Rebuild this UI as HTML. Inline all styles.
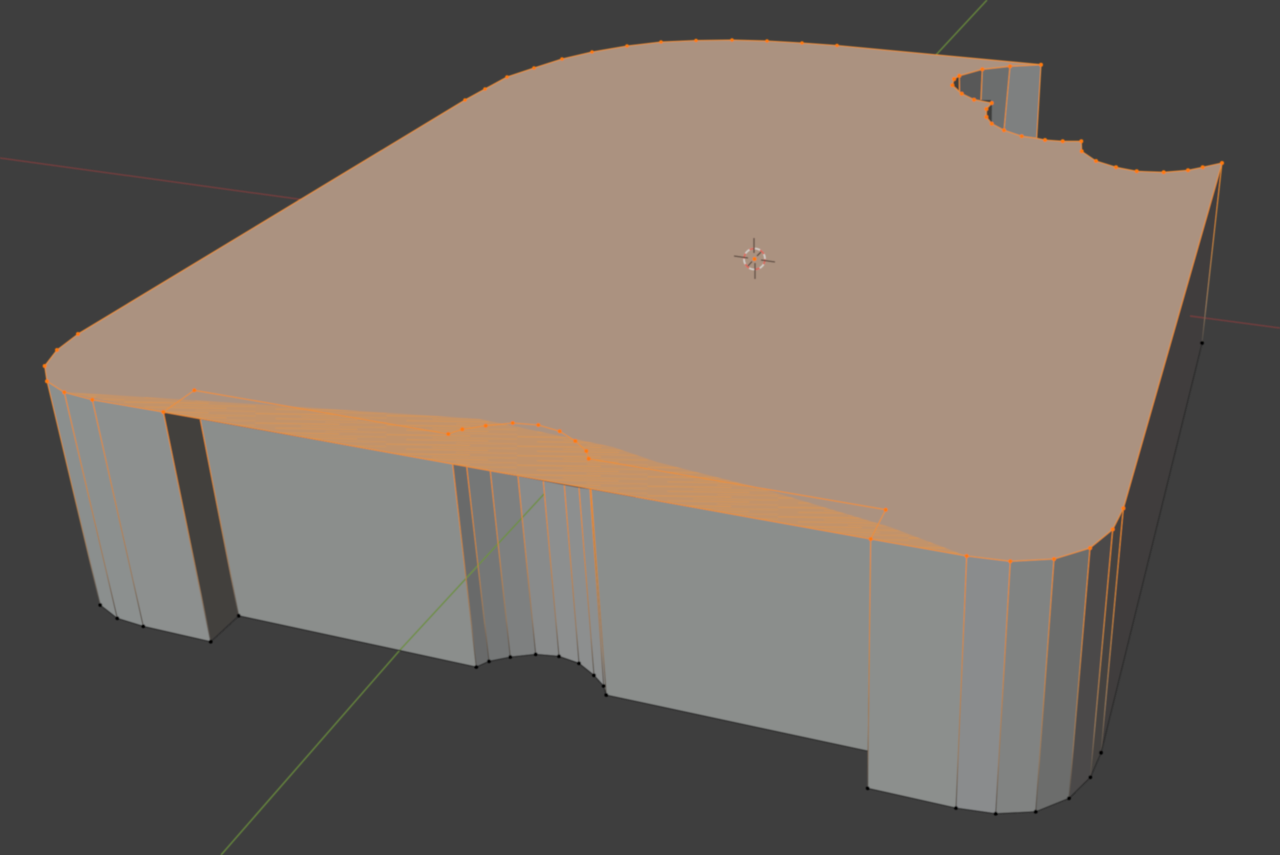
<!DOCTYPE html>
<html lang="en">
<head>
<meta charset="utf-8">
<title>3D viewport</title>
<style>
html,body{margin:0;padding:0;background:#3e3e3e;width:1280px;height:855px;overflow:hidden}
svg{display:block}
</style>
</head>
<body>
<svg width="1280" height="855" viewBox="0 0 1280 855" xmlns="http://www.w3.org/2000/svg">
<defs>
<filter id="soft" x="0" y="0" width="1280" height="855" filterUnits="userSpaceOnUse"><feGaussianBlur stdDeviation="0.4"/></filter>
<linearGradient id="e" x1="0" y1="0" x2="0" y2="1">
<stop offset="0" stop-color="#f08a28"/>
<stop offset=".45" stop-color="#c98540"/>
<stop offset=".8" stop-color="#94785c"/>
<stop offset="1" stop-color="#4e4b48"/>
</linearGradient>
<pattern id="h" width="131" height="9.5" patternUnits="userSpaceOnUse" patternTransform="rotate(0.9)">
<line x1="0" y1="1" x2="84" y2="1" stroke="#f0963c" stroke-opacity=".42" stroke-width="1"/>
<line x1="46" y1="3.4" x2="131" y2="3.4" stroke="#f0963c" stroke-opacity=".3" stroke-width="1"/>
<line x1="20" y1="5.8" x2="102" y2="5.8" stroke="#f0963c" stroke-opacity=".4" stroke-width="1"/>
<line x1="70" y1="8.2" x2="131" y2="8.2" stroke="#f0963c" stroke-opacity=".28" stroke-width="1"/>
</pattern>
<clipPath id="hc"><polygon points="64,392 330,409 480,419 613,447 657,462 700,473 760,488 800,500 890,527 966.7,556 870.7,539 163.3,412"/></clipPath>
</defs>
<rect width="1280" height="855" fill="#3e3e3e"/>
<g filter="url(#soft)">

<!-- axes -->
<g fill="none" stroke-width="1.5">
<line x1="0" y1="158" x2="305" y2="200" stroke="#713d3e"/>
<line x1="987" y1="0" x2="935" y2="56" stroke="#64823c"/>
<line x1="400" y1="650" x2="221" y2="855" stroke="#64823c"/>
</g>

<!-- walls -->
<g stroke="none">
<polygon points="1123,508 1222,163 1202,343 1101,752.7" fill="#3f3d3c"/>
<polygon points="47,381 64.3,392.3 117.3,618.3 100.3,605" fill="#8b8f8e"/>
<polygon points="64.3,392.3 92.3,399.7 143.3,626.3 117.3,618.3" fill="#8c908f"/>
<polygon points="92.3,399.7 163.3,412 210.7,641.7 143.3,626.3" fill="#8d908f"/>
<polygon points="163.3,412 200.3,419.3 238.7,615.7 210.7,641.7" fill="#433f3e"/>
<polygon points="200.3,419.3 452.7,464.3 476.3,667 238.7,615.7" fill="#8b8e8c"/>
<polygon points="452.7,464.3 466.7,466.7 489,661.3 476.3,667" fill="#696a6a"/>
<polygon points="466.7,466.7 490.3,471 510.3,657 489,661.3" fill="#757777"/>
<polygon points="490.3,471 518,476.3 535.7,654.3 510.3,657" fill="#7e8080"/>
<polygon points="518,476.3 543.3,481 559,656.3 535.7,654.3" fill="#898b8b"/>
<polygon points="543.3,481 564.3,485 579,663.3 559,656.3" fill="#8d8f8f"/>
<polygon points="564.3,485 579,487.7 594,675.3 579,663.3" fill="#8d8f8f"/>
<polygon points="579,487.7 590,489.3 606.3,695 603.7,686 594,675.3" fill="#8d8f8f"/>
<polygon points="590,489.3 870.7,539 867.7,751 606.3,695" fill="#8b8e8c"/>
<polygon points="870.7,539 966.7,556 956,808 867.7,788.3" fill="#8c8f8d"/>
<polygon points="966.7,556 1010.3,561.3 995.7,813.7 956,808" fill="#8a8c8d"/>
<polygon points="1010.3,561.3 1054,559 1035.7,811.7 995.7,813.7" fill="#818382"/>
<polygon points="1054,559 1090,548 1069,798.3 1035.7,811.7" fill="#6c6d6c"/>
<polygon points="1090,548 1112.7,529.3 1090.3,777.3 1069,798.3" fill="#4b4949"/>
<polygon points="1112.7,529.3 1123.3,508.3 1101,752.7 1090.3,777.3" fill="#444241"/>
<!-- back cutout walls -->
<polygon points="1010,64 1041,64.7 1036.7,145 1004,135" fill="#7e8080"/>
<polygon points="982.3,64 1010.3,64 1004,135 990,125 991,100 980,100" fill="#6c6e6e"/>
<polygon points="959.3,70 982.3,66 980,102 960,95" fill="#585858"/>
<polygon points="950,78 959.3,72 959,95 950,88" fill="#3d3c3b"/>
<polygon points="992,104 986.3,109 986.3,117 991.7,124" fill="#3d3c3b"/>
</g>

<line x1="1190" y1="316" x2="1280" y2="328" stroke="#713d3e" stroke-width="1.5"/>
<!-- green axis over wall -->
<line x1="544" y1="494" x2="400" y2="650" stroke="#6f8f45" stroke-width="1.5"/>

<!-- top face -->
<polygon fill="#ab9280" points="1041,64.7 837,45.5 802,43 767,41 732,40 696,40.5 661,42 627,46 592,52 562,59 534,68 507,77 485,89 465,100 78,334 57,350 44.7,366 47,381.3 64.3,392.3 92.3,399.7 163.3,412 870.7,539 966.7,556 1010.3,561.3 1054,559 1090,548 1112.7,529.3 1123.3,508.3 1222,163 1202.7,167.3 1188,170.3 1163.7,172.3 1136.7,171.3 1116,167.3 1096,161 1081.7,151.3 1081.3,141.3 1062.7,141.3 1045,140 1036.7,138.3 1021.7,136.3 1004,130.3 991.7,123.7 986.3,117 986.3,109 991.7,103 974,99.7 961.7,93.7 952.3,85.3 954,79 959.3,75.7 982.3,69.3 1010,66.3"/>

<!-- hatching -->
<g clip-path="url(#hc)">
<rect x="60" y="385" width="910" height="175" fill="#e0954f" fill-opacity=".44"/>
<rect x="60" y="385" width="910" height="175" fill="url(#h)"/>
</g>

<!-- wall edges -->
<g fill="none" stroke="url(#e)" stroke-width="1.05">
<line x1="47" y1="381" x2="100.3" y2="605"/>
<line x1="64.3" y1="392.3" x2="117.3" y2="618.3"/>
<line x1="92.3" y1="399.7" x2="143.3" y2="626.3"/>
<line x1="163.3" y1="412" x2="210.7" y2="641.7"/>
<line x1="200.3" y1="419.3" x2="238.7" y2="615.7"/>
<line x1="452.7" y1="464.3" x2="476.3" y2="667"/>
<line x1="466.7" y1="466.7" x2="489" y2="661.3"/>
<line x1="490.3" y1="471" x2="510.3" y2="657"/>
<line x1="518" y1="476.3" x2="535.7" y2="654.3"/>
<line x1="543.3" y1="481" x2="559" y2="656.3"/>
<line x1="564.3" y1="485" x2="579" y2="663.3"/>
<line x1="579" y1="487.7" x2="594" y2="675.3"/>
<line x1="590" y1="489.3" x2="603.7" y2="686"/>
<line x1="591" y1="489.3" x2="606.3" y2="695"/>
<line x1="870.7" y1="539" x2="867.7" y2="788.3"/>
<line x1="966.7" y1="556" x2="956" y2="808"/>
<line x1="1010.3" y1="561.3" x2="995.7" y2="813.7"/>
<line x1="1054" y1="559" x2="1035.7" y2="811.7"/>
<line x1="1090" y1="548" x2="1069" y2="798.3"/>
<line x1="1112.7" y1="529.3" x2="1090.3" y2="777.3"/>
<line x1="1123.3" y1="508.3" x2="1101" y2="752.7"/>
<line x1="1222" y1="163" x2="1202" y2="343"/>
</g>

<!-- bottom edges -->
<g fill="none" stroke="#2a2a2a" stroke-width="1.1">
<polyline points="100.3,605 117.3,618.3 143.3,626.3 210.7,641.7 238.7,615.7 476.3,667 489,661.3 510.3,657 535.7,654.3 559,656.3 579,663.3 594,675.3 603.7,686 606.3,695 867.7,751"/>
<polyline points="867.7,788.3 956,808 995.7,813.7 1035.7,811.7 1069,798.3 1090.3,777.3 1101,752.7 1202,343"/>
</g>

<!-- top outline -->
<g fill="none" stroke="#ec8f38" stroke-width="1.05" stroke-linejoin="round">
<polyline points="1041,64.7 837,45.5 802,43 767,41 732,40 696,40.5 661,42 627,46 592,52 562,59 534,68 507,77 485,89 465,100 78,334 57,350 44.7,366 47,381.3 64.3,392.3 92.3,399.7 163.3,412 870.7,539 966.7,556 1010.3,561.3 1054,559 1090,548 1112.7,529.3 1123.3,508.3 1222,163 1202.7,167.3 1188,170.3 1163.7,172.3 1136.7,171.3 1116,167.3 1096,161 1081.7,151.3 1081.3,141.3 1062.7,141.3 1045,140 1036.7,138.3 1021.7,136.3 1004,130.3 991.7,123.7 986.3,117 986.3,109 991.7,103 974,99.7 961.7,93.7 952.3,85.3 954,79 959.3,75.7 982.3,69.3 1010,66.3 1041,64.7 1036.7,138.3"/>
<line x1="1010" y1="66.3" x2="1004" y2="130.3"/>
<line x1="982.3" y1="69.3" x2="981" y2="100"/>
<line x1="959.3" y1="75.7" x2="959.5" y2="92"/>
<polyline points="163.3,412 194.3,390.3 448.3,434 462.3,429.3 485.7,425.7 512.7,423 538.3,425 559.7,431.3 575.3,441 586.3,451 588.7,458.7 885.7,509.7 870.7,539"/>
</g>

<!-- orange vertices -->
<g fill="#ff7a0a">
<circle cx="1041" cy="64.7" r="2"/><circle cx="1010" cy="66.3" r="2"/><circle cx="982.3" cy="69.3" r="2"/><circle cx="959.3" cy="75.7" r="2"/><circle cx="954" cy="79" r="2"/><circle cx="952.3" cy="85.3" r="2"/><circle cx="961.7" cy="93.7" r="2"/><circle cx="974" cy="99.7" r="2"/><circle cx="991.7" cy="103" r="2"/><circle cx="986.3" cy="109" r="2"/><circle cx="986.3" cy="117" r="2"/><circle cx="991.7" cy="123.7" r="2"/><circle cx="1004" cy="130.3" r="2"/><circle cx="1021.7" cy="136.3" r="2"/><circle cx="1045" cy="140" r="2"/><circle cx="1062.7" cy="141.3" r="2"/><circle cx="1081.3" cy="141.3" r="2"/><circle cx="1081.7" cy="151.3" r="2"/><circle cx="1096" cy="161" r="2"/><circle cx="1116" cy="167.3" r="2"/><circle cx="1136.7" cy="171.3" r="2"/><circle cx="1163.7" cy="172.3" r="2"/><circle cx="1188" cy="170.3" r="2"/><circle cx="1202.7" cy="167.3" r="2"/><circle cx="1222" cy="163" r="2"/>
<circle cx="837" cy="45.5" r="1.8"/><circle cx="802" cy="43" r="1.8"/><circle cx="767" cy="41" r="1.8"/><circle cx="732" cy="40" r="1.8"/><circle cx="696" cy="40.5" r="1.8"/><circle cx="661" cy="42" r="1.8"/><circle cx="627" cy="46" r="1.8"/><circle cx="592" cy="52" r="1.8"/><circle cx="562" cy="59" r="1.8"/><circle cx="534" cy="68" r="1.8"/><circle cx="507" cy="77" r="1.8"/><circle cx="485" cy="89" r="1.8"/><circle cx="465" cy="100" r="1.8"/><circle cx="78" cy="334" r="2"/><circle cx="57" cy="350" r="2"/><circle cx="44.7" cy="366" r="2"/><circle cx="47" cy="381.3" r="2"/><circle cx="64.3" cy="392.3" r="2"/><circle cx="92.3" cy="399.7" r="2"/><circle cx="163.3" cy="412" r="2"/><circle cx="194.3" cy="390.3" r="2"/>
<circle cx="448.3" cy="434" r="2"/><circle cx="462.3" cy="429.3" r="2"/><circle cx="485.7" cy="425.7" r="2"/><circle cx="512.7" cy="423" r="2"/><circle cx="538.3" cy="425" r="2"/><circle cx="559.7" cy="431.3" r="2"/><circle cx="575.3" cy="441" r="2"/><circle cx="586.3" cy="451" r="2"/><circle cx="588.7" cy="458.7" r="2"/><circle cx="885.7" cy="509.7" r="2"/><circle cx="870.7" cy="539" r="2"/><circle cx="966.7" cy="556" r="2"/><circle cx="1010.3" cy="561.3" r="2"/><circle cx="1054" cy="559" r="2"/><circle cx="1090" cy="548" r="2"/><circle cx="1112.7" cy="529.3" r="2"/><circle cx="1123.3" cy="508.3" r="2"/>
</g>

<!-- black vertices -->
<g fill="#000">
<circle cx="100.3" cy="605" r="1.9"/><circle cx="117.3" cy="618.3" r="1.9"/><circle cx="143.3" cy="626.3" r="1.9"/><circle cx="210.7" cy="641.7" r="1.9"/><circle cx="238.7" cy="615.7" r="1.9"/><circle cx="476.3" cy="667" r="1.9"/><circle cx="489" cy="661.3" r="1.9"/><circle cx="510.3" cy="657" r="1.9"/><circle cx="535.7" cy="654.3" r="1.9"/><circle cx="559" cy="656.3" r="1.9"/><circle cx="579" cy="663.3" r="1.9"/><circle cx="594" cy="675.3" r="1.9"/><circle cx="603.7" cy="686" r="1.9"/><circle cx="606.3" cy="695" r="1.9"/><circle cx="867.7" cy="788.3" r="1.9"/><circle cx="956" cy="808" r="1.9"/><circle cx="995.7" cy="813.7" r="1.9"/><circle cx="1035.7" cy="811.7" r="1.9"/><circle cx="1069" cy="798.3" r="1.9"/><circle cx="1090.3" cy="777.3" r="1.9"/><circle cx="1101" cy="752.7" r="1.9"/><circle cx="1202" cy="343" r="1.9"/>
</g>

<!-- 3D cursor -->
<g fill="none">
<circle cx="754.5" cy="259" r="10.5" stroke="#d4cfc9" stroke-width="1.7"/>
<circle cx="754.5" cy="259" r="10.5" stroke="#d9665a" stroke-width="1.7" stroke-dasharray="5.5 5.5"/>
<g stroke="#5b4a3f" stroke-width="1.3">
<line x1="754" y1="238" x2="754" y2="253"/>
<line x1="755" y1="263" x2="755" y2="279"/>
<line x1="734" y1="256" x2="748" y2="258"/>
<line x1="761" y1="260" x2="775" y2="262"/>
<line x1="748" y1="266" x2="752" y2="261.5"/>
<line x1="757" y1="256" x2="761" y2="252"/>
</g>
</g>
<circle cx="754.5" cy="259" r="2" fill="#ff7a0a"/>
</g>
</svg>
</body>
</html>
